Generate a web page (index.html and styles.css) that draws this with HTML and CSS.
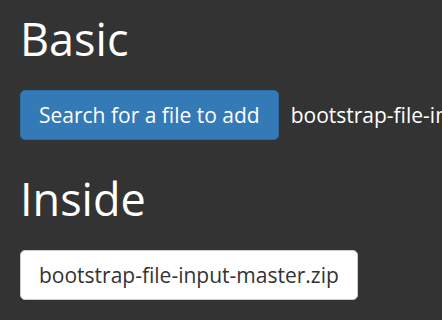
FILE: index.html
```html
<!DOCTYPE html>
<html>
    <head>
        <meta charset="utf-8">
        <title>bootstrap-file-input</title>
        <link rel="stylesheet" href="styles.css">
    </head>
    <body>
        <section class="demo">
            <h1>Basic</h1>
            <div class="file-row">
                <span class="btn btn-primary">Search for a file to add</span>
                <span class="file-name">bootstrap-file-input-master.zip</span>
            </div>
        </section>

        <section class="demo">
            <h1>Inside</h1>
            <div class="file-row">
                <span class="btn btn-default">bootstrap-file-input-master.zip</span>
            </div>
        </section>
    </body>
</html>
```

FILE: styles.css
```css
html, body {
    margin: 0;
    background: #333333;
}

body {
    padding: 0 20px;
    font-family: "Open Sans", "DejaVu Sans", sans-serif;
    color: #ffffff;
    overflow: hidden;
}

.demo {
    margin-bottom: 20px;
}

h1 {
    margin: 0;
    padding-top: 9px;
    font-size: 45px;
    font-weight: 400;
    line-height: 60px;
}

.file-row {
    display: flex;
    align-items: center;
    gap: 12px;
    margin-top: 21px;
    white-space: nowrap;
}

.btn {
    display: inline-block;
    box-sizing: border-box;
    height: 50px;
    line-height: 48px;
    padding: 0 18px;
    font-size: 21px;
    border: 1px solid transparent;
    border-radius: 5px;
}

.btn-primary {
    background: #337ab7;
    border-color: #2e6da4;
    color: #ffffff;
}

.btn-default {
    background: #ffffff;
    border-color: #cccccc;
    color: #333333;
}

.file-name {
    font-size: 21px;
}
```
